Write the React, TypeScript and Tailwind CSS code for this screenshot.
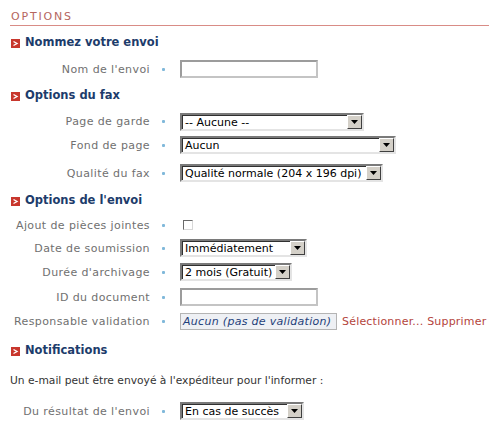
import React from "react";

const font = { fontFamily: '"DejaVu Sans", Verdana, sans-serif' };

function Bullet() {
  return (
    <svg width="9" height="9" viewBox="0 0 9 9" className="shrink-0">
      <rect x="0" y="0" width="9" height="9" fill="#c8372d" />
      <path d="M2.5 2.5 L6 4.5 L2.5 6.5" stroke="#ffffff" strokeWidth="1.4" fill="none" />
    </svg>
  );
}

function Header({ children, mt }: { children: React.ReactNode; mt: string }) {
  return (
    <div className={`flex items-center gap-[5px] h-[14px] pl-[1px] ${mt}`}>
      <Bullet />
      <span className="text-[11.5px] font-bold text-[#1d3c6b] leading-none">{children}</span>
    </div>
  );
}

function Row({
  label,
  children,
  h = "h-[24px]",
  mt = "",
}: {
  label: string;
  children: React.ReactNode;
  h?: string;
  mt?: string;
}) {
  return (
    <div className={`flex items-center ${h} ${mt}`}>
      <div className="w-[140px] text-right text-[11px] tracking-[0.4px] text-[#707070] whitespace-nowrap leading-none">{label}</div>
      <div className="w-[30px] flex justify-start pl-[12px]">
        <div className="w-[3px] h-[3px] bg-[#80b8da] rounded-[1px]" />
      </div>
      {children}
    </div>
  );
}

function Select({ w, value }: { w: string; value: string }) {
  return (
    <div
      className={`${w} h-[18px] flex items-stretch bg-white border-2 border-t-[#7a7a7a] border-l-[#7a7a7a] border-b-[#e4e4e4] border-r-[#e4e4e4]`}
    >
      <div className="flex-1 flex items-center pl-[2px] text-[11px] text-black whitespace-nowrap overflow-hidden leading-none border-t border-l border-[#303030]">
        {value}
      </div>
      <div className="w-[15px] flex items-center justify-center bg-[#d4d0c8] border border-t-white border-l-white border-b-[#404040] border-r-[#404040] shrink-0">
        <svg width="7" height="4" viewBox="0 0 7 4">
          <path d="M0 0 H7 L3.5 4 Z" fill="#000" />
        </svg>
      </div>
    </div>
  );
}

function Input({ w }: { w: string }) {
  return (
    <div className={`${w} h-[18px] bg-white border-2 border-[#c4c4c4] border-t-[#9c9c9c] border-l-[#9c9c9c]`} />
  );
}

export default function App() {
  return (
    <div className="w-[499px] h-[445px] bg-white px-[10px] pt-[11px]" style={font}>
      <div className="h-[15px] border-b border-[#d98c86] text-[11px] leading-none tracking-[1.8px] text-[#b5665e] pl-[1px]">
        OPTIONS
      </div>

      <Header mt="mt-[10px]">Nommez votre envoi</Header>
      <Row label="Nom de l'envoi" mt="mt-[7px]">
        <Input w="w-[138px]" />
      </Row>

      <Header mt="mt-[8px]">Options du fax</Header>
      <Row label="Page de garde" h="h-[23px]" mt="mt-[7px]">
        <Select w="w-[184px]" value="-- Aucune --" />
      </Row>
      <Row label="Fond de page">
        <Select w="w-[216px]" value="Aucun" />
      </Row>
      <Row label="Qualité du fax" mt="mt-[4px]">
        <Select w="w-[203px]" value="Qualité normale (204 x 196 dpi)" />
      </Row>

      <Header mt="mt-[9px]">Options de l'envoi</Header>
      <Row label="Ajout de pièces jointes" h="h-[22px]" mt="mt-[6px]">
        <div className="ml-[3px] w-[10px] h-[10px] bg-white border border-t-[#6a6a6a] border-l-[#6a6a6a] border-b-[#d8d8d8] border-r-[#d8d8d8]" />
      </Row>
      <Row label="Date de soumission">
        <Select w="w-[127px]" value="Immédiatement" />
      </Row>
      <Row label="Durée d'archivage">
        <Select w="w-[112px]" value="2 mois (Gratuit)" />
      </Row>
      <Row label="ID du document" mt="mt-[1px]">
        <Input w="w-[138px]" />
      </Row>
      <Row label="Responsable validation">
        <div className="w-[157px] h-[17px] flex items-center pl-[2px] bg-[#eef0f4] border border-[#b4b4b4] text-[11px] tracking-[0.3px] italic text-[#1f3f7a] whitespace-nowrap leading-none">
          Aucun (pas de validation)
        </div>
        <span className="ml-[5px] text-[11px] tracking-[0.2px] text-[#b4443c] whitespace-nowrap leading-none">
          Sélectionner... Supprimer
        </span>
      </Row>

      <Header mt="mt-[11px]">Notifications</Header>
      <div className="mt-[16px] h-[14px] flex items-center text-[10.7px] text-[#333333] leading-none whitespace-nowrap">
        Un e-mail peut être envoyé à l'expéditeur pour l'informer :
      </div>
      <Row label="Du résultat de l'envoi" mt="mt-[11px]">
        <Select w="w-[124px]" value="En cas de succès" />
      </Row>
    </div>
  );
}
